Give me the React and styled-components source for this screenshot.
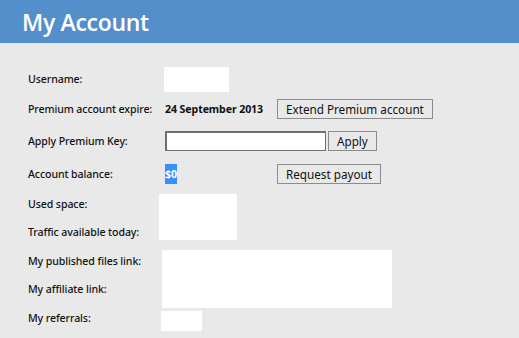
import React from 'react';
import styled, { createGlobalStyle } from 'styled-components';

const GlobalStyle = createGlobalStyle`
  html, body {
    margin: 0;
    padding: 0;
    background: #e9e9e9;
  }
  body {
    font-family: "Noto Sans", "Open Sans", sans-serif;
    color: #111;
  }
`;

const Header = styled.div`
  height: 43px;
  background: #548fcc;
  display: flex;
  align-items: center;
  padding-left: 22px;
`;

const Title = styled.h1`
  margin: 0;
  font-family: "Open Sans", sans-serif;
  font-weight: 600;
  font-size: 23px;
  color: #fff;
  letter-spacing: -0.3px;
`;

const Form = styled.div`
  display: grid;
  grid-template-columns: 137px 1fr;
  grid-template-rows: 30px 30px 34px 32px 28px 28px 30px 26px 32px;
  padding: 21px 0 0 28px;
`;

const Label = styled.div`
  font-size: 10.6px;
  font-weight: 500;
  letter-spacing: -0.1px;
  display: flex;
  align-items: center;
  grid-column: 1;
  grid-row: ${p => p.row || 'auto'};
`;

const Value = styled.div`
  grid-column: 2;
  display: flex;
  align-items: center;
  font-size: 10.6px;
`;

const Cell = styled.div`
  width: 112px;
`;

const Bold = styled.span`
  font-weight: 700;
  letter-spacing: -0.1px;
`;

const Selected = styled.span`
  font-weight: 700;
  background: #3390ff;
  color: #fff;
  padding: 3px 0;
`;

const Blank = styled.div`
  background: #fff;
  width: ${p => p.w}px;
  height: ${p => p.h}px;
  margin-left: ${p => p.shift || 0}px;
  margin-top: ${p => p.top || 0}px;
  align-self: ${p => (p.top ? 'start' : 'center')};
  grid-column: 2;
  grid-row: ${p => p.rows || 'auto'};
`;

const Button = styled.button`
  font-family: "Noto Sans", "Open Sans", sans-serif;
  font-size: 11.7px;
  color: #111;
  background: #e9e9e9;
  border: 1px solid #8c8c8c;
  height: 20px;
  padding: 0 8px;
  line-height: 18px;
  margin-left: ${p => p.gap || 0}px;
`;

const KeyInput = styled.input`
  width: 161px;
  height: 20px;
  box-sizing: border-box;
  border: 1px solid #6f6f6f;
  border-top-width: 2px;
  border-left-width: 2px;
  background: #fff;
  padding: 0 3px;
`;

export default function App() {
  return (
    <>
      <GlobalStyle />
      <Header>
        <Title>My Account</Title>
      </Header>
      <Form>
        <Label>Username:</Label>
        <Blank w={65} h={25} shift={-1} />

        <Label>Premium account expire:</Label>
        <Value>
          <Cell>
            <Bold>24 September 2013</Bold>
          </Cell>
          <Button>Extend Premium account</Button>
        </Value>

        <Label>Apply Premium Key:</Label>
        <Value>
          <KeyInput type="text" />
          <Button gap={2}>Apply</Button>
        </Value>

        <Label>Account balance:</Label>
        <Value>
          <Cell>
            <Selected>$0</Selected>
          </Cell>
          <Button>Request payout</Button>
        </Value>

        <Label row={5}>Used space:</Label>
        <Label row={6}>Traffic available today:</Label>
        <Blank w={78} h={46} shift={-6} top={4} rows="5 / span 2" />

        <Label row={7}>My published files link:</Label>
        <Label row={8}>My affiliate link:</Label>
        <Blank w={230} h={58} shift={-3} top={4} rows="7 / span 2" />

        <Label row={9}>My referrals:</Label>
        <Blank w={41} h={20} shift={-4} top={9} rows="9" />
      </Form>
    </>
  );
}
